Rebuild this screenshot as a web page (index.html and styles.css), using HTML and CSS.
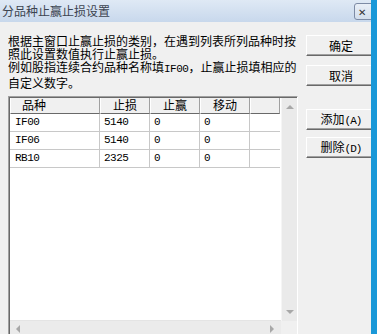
FILE: index.html
```html
<!DOCTYPE html>
<html lang="zh-CN">
<head>
    <meta charset="UTF-8">
    <title>分品种止赢止损设置</title>
    <link rel="stylesheet" href="styles.css">
</head>
<body>
    <div class="window">
        <div class="titlebar">
            <span class="title">分品种止赢止损设置</span>
            <span class="close-box">&#x2715;</span>
        </div>
        <div class="content">
            <div class="left-col">
                <p class="note">根据主窗口止赢止损的类别，在遇到列表所列品种时按<br>照此设置数值执行止赢止损。<br>例如股指连续合约品种名称填<span class="latin">IF00</span>，止赢止损填相应的<br>自定义数字。</p>
                <div class="listbox">
                    <div class="list-main">
                        <div class="list-view">
                            <div class="grid">
                                <div class="head first">品种</div>
                                <div class="head">止损</div>
                                <div class="head">止赢</div>
                                <div class="head">移动</div>
                                <div class="head last"></div>

                                <div class="cell">IF00</div>
                                <div class="cell">5140</div>
                                <div class="cell">0</div>
                                <div class="cell">0</div>
                                <div class="cell last"></div>

                                <div class="cell">IF06</div>
                                <div class="cell">5140</div>
                                <div class="cell">0</div>
                                <div class="cell">0</div>
                                <div class="cell last"></div>

                                <div class="cell">RB10</div>
                                <div class="cell">2325</div>
                                <div class="cell">0</div>
                                <div class="cell">0</div>
                                <div class="cell last"></div>
                            </div>
                        </div>
                        <div class="vscroll">
                            <span class="arrow up"></span>
                            <span class="arrow down"></span>
                        </div>
                    </div>
                    <div class="list-bottom">
                        <div class="hscroll">
                            <span class="arrow left"></span>
                            <span class="arrow right"></span>
                        </div>
                        <div class="corner"></div>
                    </div>
                </div>
            </div>
            <div class="buttons">
                <button class="btn">确定</button>
                <button class="btn btn-cancel">取消</button>
                <button class="btn btn-add">添加<span class="latin">(A)</span></button>
                <button class="btn btn-del">删除<span class="latin">(D)</span></button>
            </div>
        </div>
    </div>
    <div class="edge"></div>
</body>
</html>
```

FILE: styles.css
```css
body {
    margin: 0;
    width: 377px;
    height: 334px;
    overflow: hidden;
    background-color: #f0f0f0;
    font-family: "Noto Sans CJK SC", sans-serif;
    font-size: 12px;
    color: #000;
}
.window {
    width: 390px;
    height: 334px;
    background-color: #f0f0f0;
}
.titlebar {
    height: 22px;
    display: flex;
    align-items: center;
    background: linear-gradient(#dfe9f5, #c8d8ec);
}
.title {
    margin-left: 2px;
    font-size: 12px;
    color: #3c4450;
    line-height: 22px;
}
.close-box {
    margin-left: auto;
    margin-right: 5px;
    width: 26px;
    height: 15px;
    border: 1px solid #7d8ba5;
    border-radius: 3px;
    background: linear-gradient(#e9eff7, #d3deec);
    font-size: 10px;
    line-height: 15px;
    color: #333;
    padding-left: 3px;
    box-sizing: content-box;
}
.content {
    display: flex;
    padding-left: 8px;
}
.left-col { width: 290px; }
.note {
    margin: 12px 0 0 0;
    line-height: 13px;
    white-space: nowrap;
}
.latin {
    font-family: "Liberation Mono", monospace;
    font-size: 11px;
    letter-spacing: -0.5px;
}
.listbox {
    margin-top: 7px;
    width: 290px;
    height: 243px;
    box-sizing: border-box;
    border-top: 1px solid #a0a0a0;
    border-left: 1px solid #a0a0a0;
    border-right: 1px solid #fff;
    border-bottom: 1px solid #fff;
    box-shadow: inset 1px 1px 0 #696969;
    padding: 1px 0 0 1px;
}
.list-main {
    display: flex;
    height: 223px;
}
.list-view {
    width: 271px;
    background-color: #fff;
    border-bottom: 1px solid #e4e4e4;
}
.grid {
    display: grid;
    grid-template-columns: 90px 50px 50px 50px 30px;
    grid-auto-rows: 18px;
    grid-template-rows: 16px;
}
.head {
    box-sizing: border-box;
    background-color: #f0f0f0;
    border-left: 1px solid #fff;
    border-right: 1px solid #a0a0a0;
    border-bottom: 1px solid #696969;
    text-align: center;
    line-height: 14px;
}
.head.first {
    text-align: left;
    padding-left: 11px;
}
.cell {
    box-sizing: border-box;
    border-right: 1px solid #c8c8c8;
    border-bottom: 1px solid #c8c8c8;
    padding-left: 4px;
    line-height: 17px;
    font-family: "Liberation Mono", monospace;
    font-size: 11px;
    letter-spacing: -0.5px;
}
.grid > .cell:nth-child(5n+1) { padding-left: 5px; }
.cell.last { border-right: none; }
.vscroll {
    width: 16px;
    background-color: #eaeaea;
    border-left: 1px solid #f5f5f5;
    box-sizing: border-box;
    position: relative;
}
.list-bottom {
    display: flex;
    height: 17px;
}
.hscroll {
    width: 271px;
    background-color: #ebebeb;
    position: relative;
}
.corner {
    flex: 1;
    background-color: #f0f0f0;
}
.arrow {
    position: absolute;
    width: 0;
    height: 0;
}
.arrow.up {
    top: 7px;
    left: 4px;
    border-left: 4px solid transparent;
    border-right: 4px solid transparent;
    border-bottom: 4px solid #a8a8a8;
}
.arrow.down {
    bottom: 7px;
    left: 4px;
    border-left: 4px solid transparent;
    border-right: 4px solid transparent;
    border-top: 4px solid #a8a8a8;
}
.arrow.left {
    top: 4px;
    left: 6px;
    border-top: 4px solid transparent;
    border-bottom: 4px solid transparent;
    border-right: 4px solid #a8a8a8;
}
.arrow.right {
    top: 4px;
    right: 7px;
    border-top: 4px solid transparent;
    border-bottom: 4px solid transparent;
    border-left: 4px solid #a8a8a8;
}
.buttons {
    display: flex;
    flex-direction: column;
    margin-left: 8px;
    padding-top: 13px;
}
.btn {
    width: 70px;
    height: 21px;
    padding: 0;
    font-family: "Noto Sans CJK SC", sans-serif;
    font-size: 12px;
    color: #000;
    background-color: #f0f0f0;
    border-top: 1px solid #fff;
    border-left: 1px solid #fff;
    border-right: 1px solid #696969;
    border-bottom: 1px solid #696969;
    box-shadow: inset -1px -1px 0 #a0a0a0;
    line-height: 18px;
}
.btn .latin { letter-spacing: -1px; }
.btn-cancel { margin-top: 9px; }
.btn-add { margin-top: 23px; }
.btn-del { margin-top: 7px; }
.edge {
    position: absolute;
    top: 0;
    left: 371px;
    width: 6px;
    height: 334px;
    background-color: #1a98d8;
}
```
